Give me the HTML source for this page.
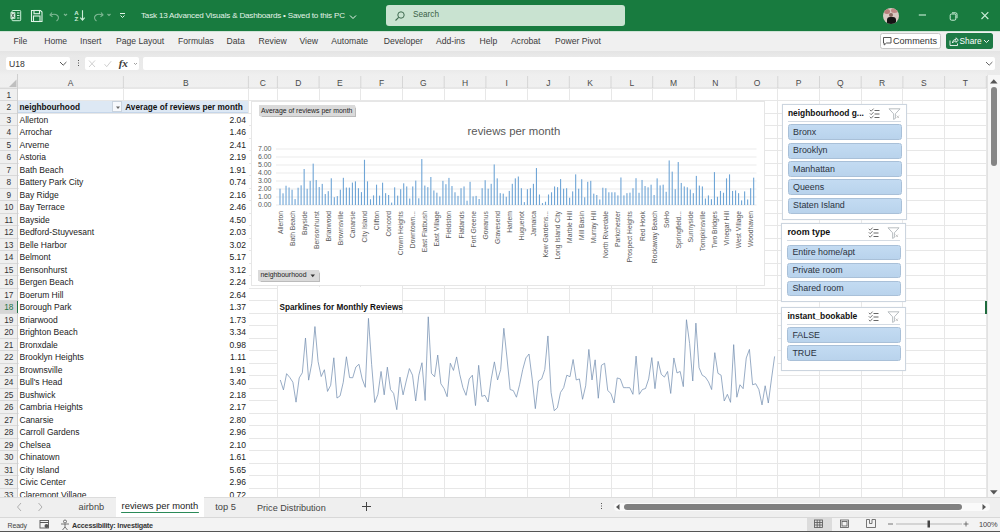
<!DOCTYPE html><html><head><meta charset="utf-8"><style>
*{margin:0;padding:0;box-sizing:border-box}
html,body{width:1000px;height:532px;overflow:hidden;background:#fff;font-family:"Liberation Sans", sans-serif}
.ab{position:absolute}
.t{position:absolute;white-space:nowrap;line-height:1}

</style></head><body>
<div class="ab" style="left:0;top:0;width:1000px;height:31px;background:#187b3f"></div>
<svg class="ab" style="left:0;top:0" width="380" height="31" viewBox="0 0 380 31">
<rect x="12" y="10.5" width="8.7" height="10.2" rx="0.8" fill="none" stroke="#cdf2da" stroke-width="1"/>
<path d="M17 13h2.5M17 15.5h2.5M17 18h2.5" stroke="#cdf2da" stroke-width="1"/>
<rect x="10.5" y="12.2" width="4.8" height="6.6" fill="#d9f5e3"/>
<path d="M11.6 13.6l2.6 3.8M14.2 13.6l-2.6 3.8" stroke="#3f5a48" stroke-width="0.9"/>
<g fill="none" stroke="#dff3e6" stroke-width="1.1">
<path d="M31.5 10.5h9l1.5 1.5v9.5h-10.5z"/>
<rect x="34" y="10.5" width="5.5" height="3.2"/>
<rect x="33.5" y="16" width="6.5" height="5.5"/>
</g>
<g fill="none" stroke="#7fb894" stroke-width="1.1">
<path d="M52 12.5l-2 2.5 2.5 1.8"/><path d="M50.5 15c2-.8 5-1.2 7 .5 1.6 1.5 1.2 4-1 5.5"/>
<path d="M64 14l1.5 1.5 1.5-1.5"/>
</g>
<g fill="#cdeed9"><text x="74.2" y="15.2" font-family="Liberation Sans" font-size="6.2" font-weight="700">A</text>
<text x="74.4" y="20.6" font-family="Liberation Sans" font-size="6.2" font-weight="700">Z</text></g>
<g fill="none" stroke="#cdeed9" stroke-width="1.1"><path d="M82.5 10.2v9.8M80.3 17.6l2.2 2.5 2.2-2.5"/></g>
<g fill="none" stroke="#7fb894" stroke-width="1.1">
<path d="M101 12.5l2 2.5-2.5 1.8"/><path d="M102.5 15c-2-.8-5-1.2-7 .5-1.6 1.5-1.2 4 1 5.5"/>
<path d="M107.5 14l1.5 1.5 1.5-1.5"/>
</g>
<g fill="none" stroke="#dff3e6" stroke-width="1"><path d="M120 13.5h5M120.5 15.5l2 2 2-2"/></g>
</svg>
<div class="t" style="left:141px;top:12.14px;font-size:8.1px;color:#e3f3e8;font-weight:400;letter-spacing:-0.2px">Task 13 Advanced Visuals &amp; Dashboards • Saved to this PC</div>
<svg class="ab" style="left:349px;top:13.5px" width="8" height="6"><path d="M1 1.5l3 3 3-3" fill="none" stroke="#eef7f1" stroke-width="1"/></svg>
<div class="ab" style="left:386px;top:5px;width:239px;height:20.5px;background:#c9e3d1;border-radius:3px"></div>
<svg class="ab" style="left:394px;top:10px" width="12" height="12"><circle cx="7" cy="5" r="3.2" fill="none" stroke="#3f6b50" stroke-width="1"/><path d="M4.7 7.3L1.5 10.5" stroke="#3f6b50" stroke-width="1.1"/></svg>
<div class="t" style="left:413px;top:11.26px;font-size:8.2px;color:#3a5f47;font-weight:400;">Search</div>
<div class="ab" style="left:883px;top:7.8px;width:16px;height:15.8px;border-radius:50%;overflow:hidden;background:#d9c9c2"><div class="ab" style="left:1px;top:1px;width:6px;height:5px;border-radius:50%;background:#b77f7a"></div><div class="ab" style="left:8px;top:0.5px;width:7px;height:5px;border-radius:50%;background:#c08a86"></div><div class="ab" style="left:6px;top:5px;width:4px;height:4px;border-radius:50%;background:#8a6a60"></div><div class="ab" style="left:4px;top:9px;width:9px;height:8px;border-radius:3px 3px 0 0;background:#151414"></div></div>
<svg class="ab" style="left:910px;top:3px" width="90" height="26">
<path d="M8.8 12h7.2" stroke="#cdeed9" stroke-width="1.1"/>
<rect x="40.2" y="11" width="5.6" height="6.2" rx="1.3" fill="none" stroke="#cdeed9" stroke-width="1"/>
<path d="M42 9.8h3.6c.9 0 1.4.5 1.4 1.4v4" fill="none" stroke="#cdeed9" stroke-width="1"/>
<path d="M71.5 9.2l6.8 6.8M78.3 9.2l-6.8 6.8" stroke="#cdeed9" stroke-width="1.1"/>
</svg>
<div class="ab" style="left:0;top:31px;width:1000px;height:20px;background:#f0f0f0;border-top:1px solid #cfe3d6"></div>
<div class="ab" style="left:0;top:50.5px;width:1000px;height:1px;background:#d2d2d2"></div>
<div class="t" style="left:13.4px;top:37.32px;font-size:8.6px;color:#3b3b3b;font-weight:400;">File</div>
<div class="t" style="left:44.2px;top:37.32px;font-size:8.6px;color:#3b3b3b;font-weight:400;">Home</div>
<div class="t" style="left:80px;top:37.32px;font-size:8.6px;color:#3b3b3b;font-weight:400;">Insert</div>
<div class="t" style="left:116px;top:37.32px;font-size:8.6px;color:#3b3b3b;font-weight:400;">Page Layout</div>
<div class="t" style="left:178px;top:37.32px;font-size:8.6px;color:#3b3b3b;font-weight:400;">Formulas</div>
<div class="t" style="left:226.6px;top:37.32px;font-size:8.6px;color:#3b3b3b;font-weight:400;">Data</div>
<div class="t" style="left:258.6px;top:37.32px;font-size:8.6px;color:#3b3b3b;font-weight:400;">Review</div>
<div class="t" style="left:299.5px;top:37.32px;font-size:8.6px;color:#3b3b3b;font-weight:400;">View</div>
<div class="t" style="left:331.3px;top:37.32px;font-size:8.6px;color:#3b3b3b;font-weight:400;">Automate</div>
<div class="t" style="left:383.7px;top:37.32px;font-size:8.6px;color:#3b3b3b;font-weight:400;">Developer</div>
<div class="t" style="left:436px;top:37.32px;font-size:8.6px;color:#3b3b3b;font-weight:400;">Add-ins</div>
<div class="t" style="left:479.6px;top:37.32px;font-size:8.6px;color:#3b3b3b;font-weight:400;">Help</div>
<div class="t" style="left:510.9px;top:37.32px;font-size:8.6px;color:#3b3b3b;font-weight:400;">Acrobat</div>
<div class="t" style="left:555px;top:37.32px;font-size:8.6px;color:#3b3b3b;font-weight:400;">Power Pivot</div>
<div class="ab" style="left:879.6px;top:33px;width:61.2px;height:15.5px;background:#fff;border:1px solid #c7c7c7;border-radius:2.5px"></div>
<svg class="ab" style="left:882px;top:36px" width="12" height="11"><path d="M1.5 1.5h7.5v5.5h-4.5l-2.3 2v-2h-0.7z" fill="none" stroke="#444" stroke-width="0.9"/></svg>
<div class="t" style="left:893px;top:36.70px;font-size:9.1px;color:#333;font-weight:400;">Comments</div>
<div class="ab" style="left:946px;top:33px;width:47px;height:15.5px;background:#1d7a45;border-radius:2.5px"></div>
<svg class="ab" style="left:948.5px;top:35.5px" width="10" height="11"><path d="M1 4.5v5h7.5v-2M3.5 7c0-2.3 1.3-3.6 3.6-3.6V1.8l2.2 2.3-2.2 2.3V4.9c-1.8 0-2.8.6-3.6 2.1z" fill="none" stroke="#fff" stroke-width="0.85"/></svg>
<div class="t" style="left:959.5px;top:37.37px;font-size:8.3px;color:#fff;font-weight:400;">Share</div>
<svg class="ab" style="left:983px;top:39px" width="7" height="5"><path d="M1 1l2.5 2.5 2.5-2.5" fill="none" stroke="#fff" stroke-width="0.9"/></svg>
<div class="ab" style="left:0;top:51px;width:1000px;height:23.5px;background:linear-gradient(#e4e4e4 0,#e9e9e9 5px,#ebebeb 100%)"></div>
<div class="ab" style="left:6.4px;top:56.8px;width:63.6px;height:13.6px;background:#fff;border-radius:2px"></div>
<div class="t" style="left:9px;top:59.62px;font-size:8.6px;color:#333;font-weight:400;">U18</div>
<svg class="ab" style="left:59px;top:61px" width="9" height="6"><path d="M1 1l3.2 3.2 3.2-3.2" fill="none" stroke="#444" stroke-width="0.9"/></svg>
<div class="ab" style="left:77.5px;top:60px;width:1.3px;height:1.3px;background:#555;box-shadow:0 2.5px #555,0 5px #555"></div>
<div class="ab" style="left:85px;top:56.8px;width:54px;height:13.6px;background:#fff;border-radius:2px"></div>
<svg class="ab" style="left:85px;top:57px" width="55" height="14"><path d="M4 3.5l6 6.5M10 3.5l-6 6.5" stroke="#c9c9c9" stroke-width="0.9"/><path d="M19.5 7.2l2.2 2.5 4.5-5.5" fill="none" stroke="#c9c9c9" stroke-width="0.9"/><path d="M49 6l1.5 1.5 1.5-1.5" fill="none" stroke="#888" stroke-width="0.8"/></svg>
<div class="t" style="left:118.8px;top:58.32px;font-size:11.2px;color:#3a3a3a;font-weight:700;font-family:'Liberation Serif';font-style:italic;letter-spacing:-0.2px">fx</div>
<div class="ab" style="left:143px;top:56.8px;width:852px;height:13.6px;background:#fff;border-radius:2px"></div>
<svg class="ab" style="left:985px;top:61px" width="9" height="6"><path d="M1 1l3.2 3.2 3.2-3.2" fill="none" stroke="#555" stroke-width="0.9"/></svg>
<div class="ab" style="left:0;top:71px;width:987px;height:17.5px;background:linear-gradient(#ebebeb 0,#efefef 4px,#f0f0f0 100%)"></div>
<svg class="ab" style="left:0;top:74.5px" width="18" height="14"><path d="M16.5 4.5v7.5h-7.5z" fill="#bfbfbf"/></svg>
<svg class="ab" style="left:0;top:0" width="1000" height="532"><line x1="123.4" y1="76" x2="123.4" y2="88" stroke="#d6d6d6" stroke-width="1"/><line x1="248.4" y1="76" x2="248.4" y2="88" stroke="#d6d6d6" stroke-width="1"/><line x1="277.4" y1="76" x2="277.4" y2="88" stroke="#d6d6d6" stroke-width="1"/><line x1="319.09999999999997" y1="76" x2="319.09999999999997" y2="88" stroke="#d6d6d6" stroke-width="1"/><line x1="360.79999999999995" y1="76" x2="360.79999999999995" y2="88" stroke="#d6d6d6" stroke-width="1"/><line x1="402.5" y1="76" x2="402.5" y2="88" stroke="#d6d6d6" stroke-width="1"/><line x1="444.2" y1="76" x2="444.2" y2="88" stroke="#d6d6d6" stroke-width="1"/><line x1="485.9" y1="76" x2="485.9" y2="88" stroke="#d6d6d6" stroke-width="1"/><line x1="527.6" y1="76" x2="527.6" y2="88" stroke="#d6d6d6" stroke-width="1"/><line x1="569.3" y1="76" x2="569.3" y2="88" stroke="#d6d6d6" stroke-width="1"/><line x1="611.0" y1="76" x2="611.0" y2="88" stroke="#d6d6d6" stroke-width="1"/><line x1="652.7" y1="76" x2="652.7" y2="88" stroke="#d6d6d6" stroke-width="1"/><line x1="694.4" y1="76" x2="694.4" y2="88" stroke="#d6d6d6" stroke-width="1"/><line x1="736.1" y1="76" x2="736.1" y2="88" stroke="#d6d6d6" stroke-width="1"/><line x1="777.8" y1="76" x2="777.8" y2="88" stroke="#d6d6d6" stroke-width="1"/><line x1="819.5" y1="76" x2="819.5" y2="88" stroke="#d6d6d6" stroke-width="1"/><line x1="861.2" y1="76" x2="861.2" y2="88" stroke="#d6d6d6" stroke-width="1"/><line x1="902.9" y1="76" x2="902.9" y2="88" stroke="#d6d6d6" stroke-width="1"/><line x1="944.6" y1="76" x2="944.6" y2="88" stroke="#d6d6d6" stroke-width="1"/><line x1="986.3000000000001" y1="76" x2="986.3000000000001" y2="88" stroke="#d6d6d6" stroke-width="1"/><line x1="0" y1="88.3" x2="986.8" y2="88.3" stroke="#c4c4c4" stroke-width="1"/></svg>
<div class="t" style="left:18.0px;top:78.60px;font-size:8.5px;color:#4a4a4a;font-weight:400;width:105.4px;text-align:center">A</div>
<div class="t" style="left:123.4px;top:78.60px;font-size:8.5px;color:#4a4a4a;font-weight:400;width:125.0px;text-align:center">B</div>
<div class="t" style="left:248.4px;top:78.60px;font-size:8.5px;color:#4a4a4a;font-weight:400;width:28.99999999999997px;text-align:center">C</div>
<div class="t" style="left:277.4px;top:78.60px;font-size:8.5px;color:#4a4a4a;font-weight:400;width:41.69999999999999px;text-align:center">D</div>
<div class="t" style="left:319.09999999999997px;top:78.60px;font-size:8.5px;color:#4a4a4a;font-weight:400;width:41.69999999999999px;text-align:center">E</div>
<div class="t" style="left:360.79999999999995px;top:78.60px;font-size:8.5px;color:#4a4a4a;font-weight:400;width:41.700000000000045px;text-align:center">F</div>
<div class="t" style="left:402.5px;top:78.60px;font-size:8.5px;color:#4a4a4a;font-weight:400;width:41.69999999999999px;text-align:center">G</div>
<div class="t" style="left:444.2px;top:78.60px;font-size:8.5px;color:#4a4a4a;font-weight:400;width:41.69999999999999px;text-align:center">H</div>
<div class="t" style="left:485.9px;top:78.60px;font-size:8.5px;color:#4a4a4a;font-weight:400;width:41.700000000000045px;text-align:center">I</div>
<div class="t" style="left:527.6px;top:78.60px;font-size:8.5px;color:#4a4a4a;font-weight:400;width:41.69999999999993px;text-align:center">J</div>
<div class="t" style="left:569.3px;top:78.60px;font-size:8.5px;color:#4a4a4a;font-weight:400;width:41.700000000000045px;text-align:center">K</div>
<div class="t" style="left:611.0px;top:78.60px;font-size:8.5px;color:#4a4a4a;font-weight:400;width:41.700000000000045px;text-align:center">L</div>
<div class="t" style="left:652.7px;top:78.60px;font-size:8.5px;color:#4a4a4a;font-weight:400;width:41.69999999999993px;text-align:center">M</div>
<div class="t" style="left:694.4px;top:78.60px;font-size:8.5px;color:#4a4a4a;font-weight:400;width:41.700000000000045px;text-align:center">N</div>
<div class="t" style="left:736.1px;top:78.60px;font-size:8.5px;color:#4a4a4a;font-weight:400;width:41.69999999999993px;text-align:center">O</div>
<div class="t" style="left:777.8px;top:78.60px;font-size:8.5px;color:#4a4a4a;font-weight:400;width:41.700000000000045px;text-align:center">P</div>
<div class="t" style="left:819.5px;top:78.60px;font-size:8.5px;color:#4a4a4a;font-weight:400;width:41.700000000000045px;text-align:center">Q</div>
<div class="t" style="left:861.2px;top:78.60px;font-size:8.5px;color:#4a4a4a;font-weight:400;width:41.69999999999993px;text-align:center">R</div>
<div class="t" style="left:902.9px;top:78.60px;font-size:8.5px;color:#4a4a4a;font-weight:400;width:41.700000000000045px;text-align:center">S</div>
<div class="t" style="left:944.6px;top:78.60px;font-size:8.5px;color:#4a4a4a;font-weight:400;width:41.700000000000045px;text-align:center">T</div>
<div class="ab" style="left:0;top:88px;width:18px;height:409px;background:#efefef"></div>
<div class="ab" style="left:0;top:300.5px;width:18px;height:12.5px;background:#d6d6d6"></div>
<svg class="ab" style="left:0;top:0" width="1000" height="532" shape-rendering="crispEdges"><line x1="0" y1="88.0" x2="18" y2="88.0" stroke="#d9d9d9"/><line x1="18" y1="88.0" x2="986.8" y2="88.0" stroke="#e7e7e7"/><line x1="0" y1="100.5" x2="18" y2="100.5" stroke="#d9d9d9"/><line x1="18" y1="100.5" x2="986.8" y2="100.5" stroke="#e7e7e7"/><line x1="0" y1="113.0" x2="18" y2="113.0" stroke="#d9d9d9"/><line x1="18" y1="113.0" x2="986.8" y2="113.0" stroke="#e7e7e7"/><line x1="0" y1="125.5" x2="18" y2="125.5" stroke="#d9d9d9"/><line x1="18" y1="125.5" x2="986.8" y2="125.5" stroke="#e7e7e7"/><line x1="0" y1="138.0" x2="18" y2="138.0" stroke="#d9d9d9"/><line x1="18" y1="138.0" x2="986.8" y2="138.0" stroke="#e7e7e7"/><line x1="0" y1="150.5" x2="18" y2="150.5" stroke="#d9d9d9"/><line x1="18" y1="150.5" x2="986.8" y2="150.5" stroke="#e7e7e7"/><line x1="0" y1="163.0" x2="18" y2="163.0" stroke="#d9d9d9"/><line x1="18" y1="163.0" x2="986.8" y2="163.0" stroke="#e7e7e7"/><line x1="0" y1="175.5" x2="18" y2="175.5" stroke="#d9d9d9"/><line x1="18" y1="175.5" x2="986.8" y2="175.5" stroke="#e7e7e7"/><line x1="0" y1="188.0" x2="18" y2="188.0" stroke="#d9d9d9"/><line x1="18" y1="188.0" x2="986.8" y2="188.0" stroke="#e7e7e7"/><line x1="0" y1="200.5" x2="18" y2="200.5" stroke="#d9d9d9"/><line x1="18" y1="200.5" x2="986.8" y2="200.5" stroke="#e7e7e7"/><line x1="0" y1="213.0" x2="18" y2="213.0" stroke="#d9d9d9"/><line x1="18" y1="213.0" x2="986.8" y2="213.0" stroke="#e7e7e7"/><line x1="0" y1="225.5" x2="18" y2="225.5" stroke="#d9d9d9"/><line x1="18" y1="225.5" x2="986.8" y2="225.5" stroke="#e7e7e7"/><line x1="0" y1="238.0" x2="18" y2="238.0" stroke="#d9d9d9"/><line x1="18" y1="238.0" x2="986.8" y2="238.0" stroke="#e7e7e7"/><line x1="0" y1="250.5" x2="18" y2="250.5" stroke="#d9d9d9"/><line x1="18" y1="250.5" x2="986.8" y2="250.5" stroke="#e7e7e7"/><line x1="0" y1="263.0" x2="18" y2="263.0" stroke="#d9d9d9"/><line x1="18" y1="263.0" x2="986.8" y2="263.0" stroke="#e7e7e7"/><line x1="0" y1="275.5" x2="18" y2="275.5" stroke="#d9d9d9"/><line x1="18" y1="275.5" x2="986.8" y2="275.5" stroke="#e7e7e7"/><line x1="0" y1="288.0" x2="18" y2="288.0" stroke="#d9d9d9"/><line x1="18" y1="288.0" x2="986.8" y2="288.0" stroke="#e7e7e7"/><line x1="0" y1="300.5" x2="18" y2="300.5" stroke="#d9d9d9"/><line x1="18" y1="300.5" x2="986.8" y2="300.5" stroke="#e7e7e7"/><line x1="0" y1="313.0" x2="18" y2="313.0" stroke="#d9d9d9"/><line x1="18" y1="313.0" x2="986.8" y2="313.0" stroke="#e7e7e7"/><line x1="0" y1="325.5" x2="18" y2="325.5" stroke="#d9d9d9"/><line x1="18" y1="325.5" x2="986.8" y2="325.5" stroke="#e7e7e7"/><line x1="0" y1="338.0" x2="18" y2="338.0" stroke="#d9d9d9"/><line x1="18" y1="338.0" x2="986.8" y2="338.0" stroke="#e7e7e7"/><line x1="0" y1="350.5" x2="18" y2="350.5" stroke="#d9d9d9"/><line x1="18" y1="350.5" x2="986.8" y2="350.5" stroke="#e7e7e7"/><line x1="0" y1="363.0" x2="18" y2="363.0" stroke="#d9d9d9"/><line x1="18" y1="363.0" x2="986.8" y2="363.0" stroke="#e7e7e7"/><line x1="0" y1="375.5" x2="18" y2="375.5" stroke="#d9d9d9"/><line x1="18" y1="375.5" x2="986.8" y2="375.5" stroke="#e7e7e7"/><line x1="0" y1="388.0" x2="18" y2="388.0" stroke="#d9d9d9"/><line x1="18" y1="388.0" x2="986.8" y2="388.0" stroke="#e7e7e7"/><line x1="0" y1="400.5" x2="18" y2="400.5" stroke="#d9d9d9"/><line x1="18" y1="400.5" x2="986.8" y2="400.5" stroke="#e7e7e7"/><line x1="0" y1="413.0" x2="18" y2="413.0" stroke="#d9d9d9"/><line x1="18" y1="413.0" x2="986.8" y2="413.0" stroke="#e7e7e7"/><line x1="0" y1="425.5" x2="18" y2="425.5" stroke="#d9d9d9"/><line x1="18" y1="425.5" x2="986.8" y2="425.5" stroke="#e7e7e7"/><line x1="0" y1="438.0" x2="18" y2="438.0" stroke="#d9d9d9"/><line x1="18" y1="438.0" x2="986.8" y2="438.0" stroke="#e7e7e7"/><line x1="0" y1="450.5" x2="18" y2="450.5" stroke="#d9d9d9"/><line x1="18" y1="450.5" x2="986.8" y2="450.5" stroke="#e7e7e7"/><line x1="0" y1="463.0" x2="18" y2="463.0" stroke="#d9d9d9"/><line x1="18" y1="463.0" x2="986.8" y2="463.0" stroke="#e7e7e7"/><line x1="0" y1="475.5" x2="18" y2="475.5" stroke="#d9d9d9"/><line x1="18" y1="475.5" x2="986.8" y2="475.5" stroke="#e7e7e7"/><line x1="0" y1="488.0" x2="18" y2="488.0" stroke="#d9d9d9"/><line x1="18" y1="488.0" x2="986.8" y2="488.0" stroke="#e7e7e7"/><line x1="0" y1="500.5" x2="18" y2="500.5" stroke="#d9d9d9"/><line x1="18" y1="500.5" x2="986.8" y2="500.5" stroke="#e7e7e7"/><line x1="123.4" y1="88" x2="123.4" y2="497" stroke="#e7e7e7"/><line x1="248.4" y1="88" x2="248.4" y2="497" stroke="#e7e7e7"/><line x1="277.4" y1="88" x2="277.4" y2="497" stroke="#e7e7e7"/><line x1="319.09999999999997" y1="88" x2="319.09999999999997" y2="497" stroke="#e7e7e7"/><line x1="360.79999999999995" y1="88" x2="360.79999999999995" y2="497" stroke="#e7e7e7"/><line x1="402.5" y1="88" x2="402.5" y2="497" stroke="#e7e7e7"/><line x1="444.2" y1="88" x2="444.2" y2="497" stroke="#e7e7e7"/><line x1="485.9" y1="88" x2="485.9" y2="497" stroke="#e7e7e7"/><line x1="527.6" y1="88" x2="527.6" y2="497" stroke="#e7e7e7"/><line x1="569.3" y1="88" x2="569.3" y2="497" stroke="#e7e7e7"/><line x1="611.0" y1="88" x2="611.0" y2="497" stroke="#e7e7e7"/><line x1="652.7" y1="88" x2="652.7" y2="497" stroke="#e7e7e7"/><line x1="694.4" y1="88" x2="694.4" y2="497" stroke="#e7e7e7"/><line x1="736.1" y1="88" x2="736.1" y2="497" stroke="#e7e7e7"/><line x1="777.8" y1="88" x2="777.8" y2="497" stroke="#e7e7e7"/><line x1="819.5" y1="88" x2="819.5" y2="497" stroke="#e7e7e7"/><line x1="861.2" y1="88" x2="861.2" y2="497" stroke="#e7e7e7"/><line x1="902.9" y1="88" x2="902.9" y2="497" stroke="#e7e7e7"/><line x1="944.6" y1="88" x2="944.6" y2="497" stroke="#e7e7e7"/><line x1="986.3000000000001" y1="88" x2="986.3000000000001" y2="497" stroke="#e7e7e7"/><line x1="17.5" y1="74" x2="17.5" y2="497" stroke="#cfcfcf"/><line x1="17.5" y1="300.5" x2="17.5" y2="313.0" stroke="#217346" stroke-width="1.5"/></svg>
<div class="t" style="left:0px;top:90.87px;font-size:8.3px;color:#333;font-weight:400;width:17.5px;text-align:center">1</div>
<div class="t" style="left:0px;top:103.37px;font-size:8.3px;color:#333;font-weight:400;width:17.5px;text-align:center">2</div>
<div class="t" style="left:0px;top:115.87px;font-size:8.3px;color:#333;font-weight:400;width:17.5px;text-align:center">3</div>
<div class="t" style="left:0px;top:128.37px;font-size:8.3px;color:#333;font-weight:400;width:17.5px;text-align:center">4</div>
<div class="t" style="left:0px;top:140.87px;font-size:8.3px;color:#333;font-weight:400;width:17.5px;text-align:center">5</div>
<div class="t" style="left:0px;top:153.37px;font-size:8.3px;color:#333;font-weight:400;width:17.5px;text-align:center">6</div>
<div class="t" style="left:0px;top:165.87px;font-size:8.3px;color:#333;font-weight:400;width:17.5px;text-align:center">7</div>
<div class="t" style="left:0px;top:178.37px;font-size:8.3px;color:#333;font-weight:400;width:17.5px;text-align:center">8</div>
<div class="t" style="left:0px;top:190.87px;font-size:8.3px;color:#333;font-weight:400;width:17.5px;text-align:center">9</div>
<div class="t" style="left:0px;top:203.37px;font-size:8.3px;color:#333;font-weight:400;width:17.5px;text-align:center">10</div>
<div class="t" style="left:0px;top:215.87px;font-size:8.3px;color:#333;font-weight:400;width:17.5px;text-align:center">11</div>
<div class="t" style="left:0px;top:228.37px;font-size:8.3px;color:#333;font-weight:400;width:17.5px;text-align:center">12</div>
<div class="t" style="left:0px;top:240.87px;font-size:8.3px;color:#333;font-weight:400;width:17.5px;text-align:center">13</div>
<div class="t" style="left:0px;top:253.37px;font-size:8.3px;color:#333;font-weight:400;width:17.5px;text-align:center">14</div>
<div class="t" style="left:0px;top:265.87px;font-size:8.3px;color:#333;font-weight:400;width:17.5px;text-align:center">15</div>
<div class="t" style="left:0px;top:278.37px;font-size:8.3px;color:#333;font-weight:400;width:17.5px;text-align:center">16</div>
<div class="t" style="left:0px;top:290.87px;font-size:8.3px;color:#333;font-weight:400;width:17.5px;text-align:center">17</div>
<div class="t" style="left:0px;top:303.37px;font-size:8.3px;color:#217346;font-weight:400;width:17.5px;text-align:center">18</div>
<div class="t" style="left:0px;top:315.87px;font-size:8.3px;color:#333;font-weight:400;width:17.5px;text-align:center">19</div>
<div class="t" style="left:0px;top:328.37px;font-size:8.3px;color:#333;font-weight:400;width:17.5px;text-align:center">20</div>
<div class="t" style="left:0px;top:340.87px;font-size:8.3px;color:#333;font-weight:400;width:17.5px;text-align:center">21</div>
<div class="t" style="left:0px;top:353.37px;font-size:8.3px;color:#333;font-weight:400;width:17.5px;text-align:center">22</div>
<div class="t" style="left:0px;top:365.87px;font-size:8.3px;color:#333;font-weight:400;width:17.5px;text-align:center">23</div>
<div class="t" style="left:0px;top:378.37px;font-size:8.3px;color:#333;font-weight:400;width:17.5px;text-align:center">24</div>
<div class="t" style="left:0px;top:390.87px;font-size:8.3px;color:#333;font-weight:400;width:17.5px;text-align:center">25</div>
<div class="t" style="left:0px;top:403.37px;font-size:8.3px;color:#333;font-weight:400;width:17.5px;text-align:center">26</div>
<div class="t" style="left:0px;top:415.87px;font-size:8.3px;color:#333;font-weight:400;width:17.5px;text-align:center">27</div>
<div class="t" style="left:0px;top:428.37px;font-size:8.3px;color:#333;font-weight:400;width:17.5px;text-align:center">28</div>
<div class="t" style="left:0px;top:440.87px;font-size:8.3px;color:#333;font-weight:400;width:17.5px;text-align:center">29</div>
<div class="t" style="left:0px;top:453.37px;font-size:8.3px;color:#333;font-weight:400;width:17.5px;text-align:center">30</div>
<div class="t" style="left:0px;top:465.87px;font-size:8.3px;color:#333;font-weight:400;width:17.5px;text-align:center">31</div>
<div class="t" style="left:0px;top:478.37px;font-size:8.3px;color:#333;font-weight:400;width:17.5px;text-align:center">32</div>
<div class="t" style="left:0px;top:490.87px;font-size:8.3px;color:#333;font-weight:400;width:17.5px;text-align:center">33</div>
<div class="ab" style="left:18.5px;top:113.5px;width:230.5px;height:383.5px;background:#fff"></div>
<div class="ab" style="left:18px;top:100.5px;width:230.4px;height:12.5px;background:#dde8f4;border-bottom:1px solid #c5d6ea"></div>
<div class="t" style="left:19.5px;top:103.62px;font-size:8.25px;color:#111;font-weight:700;">neighbourhood</div>
<div class="ab" style="left:112.4px;top:101.0px;width:10px;height:11px;background:#f7f9fc;border:1px solid #c9d3de"></div>
<svg class="ab" style="left:114.5px;top:105.5px" width="6" height="4"><path d="M1 0.5h4l-2 2.5z" fill="#666"/></svg>
<div class="t" style="left:125.2px;top:103.61px;font-size:8.26px;color:#111;font-weight:700;">Average of reviews per month</div>
<div class="t" style="left:19.5px;top:115.60px;font-size:8.5px;color:#222;font-weight:400;">Allerton</div>
<div class="t" style="left:150px;top:115.60px;font-size:8.5px;color:#222;font-weight:400;width:96px;text-align:right">2.04</div>
<div class="t" style="left:19.5px;top:128.10px;font-size:8.5px;color:#222;font-weight:400;">Arrochar</div>
<div class="t" style="left:150px;top:128.10px;font-size:8.5px;color:#222;font-weight:400;width:96px;text-align:right">1.46</div>
<div class="t" style="left:19.5px;top:140.60px;font-size:8.5px;color:#222;font-weight:400;">Arverne</div>
<div class="t" style="left:150px;top:140.60px;font-size:8.5px;color:#222;font-weight:400;width:96px;text-align:right">2.41</div>
<div class="t" style="left:19.5px;top:153.10px;font-size:8.5px;color:#222;font-weight:400;">Astoria</div>
<div class="t" style="left:150px;top:153.10px;font-size:8.5px;color:#222;font-weight:400;width:96px;text-align:right">2.19</div>
<div class="t" style="left:19.5px;top:165.60px;font-size:8.5px;color:#222;font-weight:400;">Bath Beach</div>
<div class="t" style="left:150px;top:165.60px;font-size:8.5px;color:#222;font-weight:400;width:96px;text-align:right">1.91</div>
<div class="t" style="left:19.5px;top:178.10px;font-size:8.5px;color:#222;font-weight:400;">Battery Park City</div>
<div class="t" style="left:150px;top:178.10px;font-size:8.5px;color:#222;font-weight:400;width:96px;text-align:right">0.74</div>
<div class="t" style="left:19.5px;top:190.60px;font-size:8.5px;color:#222;font-weight:400;">Bay Ridge</div>
<div class="t" style="left:150px;top:190.60px;font-size:8.5px;color:#222;font-weight:400;width:96px;text-align:right">2.16</div>
<div class="t" style="left:19.5px;top:203.10px;font-size:8.5px;color:#222;font-weight:400;">Bay Terrace</div>
<div class="t" style="left:150px;top:203.10px;font-size:8.5px;color:#222;font-weight:400;width:96px;text-align:right">2.46</div>
<div class="t" style="left:19.5px;top:215.60px;font-size:8.5px;color:#222;font-weight:400;">Bayside</div>
<div class="t" style="left:150px;top:215.60px;font-size:8.5px;color:#222;font-weight:400;width:96px;text-align:right">4.50</div>
<div class="t" style="left:19.5px;top:228.10px;font-size:8.5px;color:#222;font-weight:400;">Bedford-Stuyvesant</div>
<div class="t" style="left:150px;top:228.10px;font-size:8.5px;color:#222;font-weight:400;width:96px;text-align:right">2.03</div>
<div class="t" style="left:19.5px;top:240.60px;font-size:8.5px;color:#222;font-weight:400;">Belle Harbor</div>
<div class="t" style="left:150px;top:240.60px;font-size:8.5px;color:#222;font-weight:400;width:96px;text-align:right">3.02</div>
<div class="t" style="left:19.5px;top:253.10px;font-size:8.5px;color:#222;font-weight:400;">Belmont</div>
<div class="t" style="left:150px;top:253.10px;font-size:8.5px;color:#222;font-weight:400;width:96px;text-align:right">5.17</div>
<div class="t" style="left:19.5px;top:265.60px;font-size:8.5px;color:#222;font-weight:400;">Bensonhurst</div>
<div class="t" style="left:150px;top:265.60px;font-size:8.5px;color:#222;font-weight:400;width:96px;text-align:right">3.12</div>
<div class="t" style="left:19.5px;top:278.10px;font-size:8.5px;color:#222;font-weight:400;">Bergen Beach</div>
<div class="t" style="left:150px;top:278.10px;font-size:8.5px;color:#222;font-weight:400;width:96px;text-align:right">2.24</div>
<div class="t" style="left:19.5px;top:290.60px;font-size:8.5px;color:#222;font-weight:400;">Boerum Hill</div>
<div class="t" style="left:150px;top:290.60px;font-size:8.5px;color:#222;font-weight:400;width:96px;text-align:right">2.64</div>
<div class="t" style="left:19.5px;top:303.10px;font-size:8.5px;color:#222;font-weight:400;">Borough Park</div>
<div class="t" style="left:150px;top:303.10px;font-size:8.5px;color:#222;font-weight:400;width:96px;text-align:right">1.37</div>
<div class="t" style="left:19.5px;top:315.60px;font-size:8.5px;color:#222;font-weight:400;">Briarwood</div>
<div class="t" style="left:150px;top:315.60px;font-size:8.5px;color:#222;font-weight:400;width:96px;text-align:right">1.73</div>
<div class="t" style="left:19.5px;top:328.10px;font-size:8.5px;color:#222;font-weight:400;">Brighton Beach</div>
<div class="t" style="left:150px;top:328.10px;font-size:8.5px;color:#222;font-weight:400;width:96px;text-align:right">3.34</div>
<div class="t" style="left:19.5px;top:340.60px;font-size:8.5px;color:#222;font-weight:400;">Bronxdale</div>
<div class="t" style="left:150px;top:340.60px;font-size:8.5px;color:#222;font-weight:400;width:96px;text-align:right">0.98</div>
<div class="t" style="left:19.5px;top:353.10px;font-size:8.5px;color:#222;font-weight:400;">Brooklyn Heights</div>
<div class="t" style="left:150px;top:353.10px;font-size:8.5px;color:#222;font-weight:400;width:96px;text-align:right">1.11</div>
<div class="t" style="left:19.5px;top:365.60px;font-size:8.5px;color:#222;font-weight:400;">Brownsville</div>
<div class="t" style="left:150px;top:365.60px;font-size:8.5px;color:#222;font-weight:400;width:96px;text-align:right">1.91</div>
<div class="t" style="left:19.5px;top:378.10px;font-size:8.5px;color:#222;font-weight:400;">Bull&#x27;s Head</div>
<div class="t" style="left:150px;top:378.10px;font-size:8.5px;color:#222;font-weight:400;width:96px;text-align:right">3.40</div>
<div class="t" style="left:19.5px;top:390.60px;font-size:8.5px;color:#222;font-weight:400;">Bushwick</div>
<div class="t" style="left:150px;top:390.60px;font-size:8.5px;color:#222;font-weight:400;width:96px;text-align:right">2.18</div>
<div class="t" style="left:19.5px;top:403.10px;font-size:8.5px;color:#222;font-weight:400;">Cambria Heights</div>
<div class="t" style="left:150px;top:403.10px;font-size:8.5px;color:#222;font-weight:400;width:96px;text-align:right">2.17</div>
<div class="t" style="left:19.5px;top:415.60px;font-size:8.5px;color:#222;font-weight:400;">Canarsie</div>
<div class="t" style="left:150px;top:415.60px;font-size:8.5px;color:#222;font-weight:400;width:96px;text-align:right">2.80</div>
<div class="t" style="left:19.5px;top:428.10px;font-size:8.5px;color:#222;font-weight:400;">Carroll Gardens</div>
<div class="t" style="left:150px;top:428.10px;font-size:8.5px;color:#222;font-weight:400;width:96px;text-align:right">2.96</div>
<div class="t" style="left:19.5px;top:440.60px;font-size:8.5px;color:#222;font-weight:400;">Chelsea</div>
<div class="t" style="left:150px;top:440.60px;font-size:8.5px;color:#222;font-weight:400;width:96px;text-align:right">2.10</div>
<div class="t" style="left:19.5px;top:453.10px;font-size:8.5px;color:#222;font-weight:400;">Chinatown</div>
<div class="t" style="left:150px;top:453.10px;font-size:8.5px;color:#222;font-weight:400;width:96px;text-align:right">1.61</div>
<div class="t" style="left:19.5px;top:465.60px;font-size:8.5px;color:#222;font-weight:400;">City Island</div>
<div class="t" style="left:150px;top:465.60px;font-size:8.5px;color:#222;font-weight:400;width:96px;text-align:right">5.65</div>
<div class="t" style="left:19.5px;top:478.10px;font-size:8.5px;color:#222;font-weight:400;">Civic Center</div>
<div class="t" style="left:150px;top:478.10px;font-size:8.5px;color:#222;font-weight:400;width:96px;text-align:right">2.96</div>
<div class="t" style="left:19.5px;top:490.60px;font-size:8.5px;color:#222;font-weight:400;">Claremont Village</div>
<div class="t" style="left:150px;top:490.60px;font-size:8.5px;color:#222;font-weight:400;width:96px;text-align:right">0.72</div>
<div class="ab" style="left:251.2px;top:100.5px;width:514.0px;height:185.8px;background:#fff;border:1px solid #e6e6e6"></div>
<div class="ab" style="left:258.9px;top:105.2px;width:96.6px;height:11.2px;background:#dadada;box-shadow:0.5px 0.5px 1px #bbb"></div>
<div class="t" style="left:261px;top:108.16px;font-size:6.9px;color:#222;font-weight:400;">Average of reviews per month</div>
<div class="t" style="left:467.6px;top:125.59px;font-size:11.35px;color:#595959;font-weight:400;">reviews per month</div>
<svg class="ab" style="left:0;top:0" width="1000" height="532"><line x1="276" y1="205" x2="756.5" y2="205" stroke="#e6e6e6" stroke-width="0.8"/><line x1="276" y1="197" x2="756.5" y2="197" stroke="#e6e6e6" stroke-width="0.8"/><line x1="276" y1="189" x2="756.5" y2="189" stroke="#e6e6e6" stroke-width="0.8"/><line x1="276" y1="181" x2="756.5" y2="181" stroke="#e6e6e6" stroke-width="0.8"/><line x1="276" y1="173" x2="756.5" y2="173" stroke="#e6e6e6" stroke-width="0.8"/><line x1="276" y1="165" x2="756.5" y2="165" stroke="#e6e6e6" stroke-width="0.8"/><line x1="276" y1="157" x2="756.5" y2="157" stroke="#e6e6e6" stroke-width="0.8"/><line x1="276" y1="149" x2="756.5" y2="149" stroke="#e6e6e6" stroke-width="0.8"/><rect x="279.45" y="188.68" width="1.1" height="16.32" fill="#6fa5d6"/><rect x="282.47" y="193.32" width="1.1" height="11.68" fill="#6fa5d6"/><rect x="285.48" y="185.72" width="1.1" height="19.28" fill="#6fa5d6"/><rect x="288.50" y="187.48" width="1.1" height="17.52" fill="#6fa5d6"/><rect x="291.52" y="189.72" width="1.1" height="15.28" fill="#6fa5d6"/><rect x="294.53" y="199.08" width="1.1" height="5.92" fill="#6fa5d6"/><rect x="297.55" y="187.72" width="1.1" height="17.28" fill="#6fa5d6"/><rect x="300.57" y="185.32" width="1.1" height="19.68" fill="#6fa5d6"/><rect x="303.59" y="169.00" width="1.1" height="36.00" fill="#6fa5d6"/><rect x="306.60" y="188.76" width="1.1" height="16.24" fill="#6fa5d6"/><rect x="309.62" y="180.84" width="1.1" height="24.16" fill="#6fa5d6"/><rect x="312.64" y="163.64" width="1.1" height="41.36" fill="#6fa5d6"/><rect x="315.65" y="180.04" width="1.1" height="24.96" fill="#6fa5d6"/><rect x="318.67" y="187.08" width="1.1" height="17.92" fill="#6fa5d6"/><rect x="321.69" y="183.88" width="1.1" height="21.12" fill="#6fa5d6"/><rect x="324.70" y="194.04" width="1.1" height="10.96" fill="#6fa5d6"/><rect x="327.72" y="191.16" width="1.1" height="13.84" fill="#6fa5d6"/><rect x="330.74" y="178.28" width="1.1" height="26.72" fill="#6fa5d6"/><rect x="333.76" y="197.16" width="1.1" height="7.84" fill="#6fa5d6"/><rect x="336.77" y="196.12" width="1.1" height="8.88" fill="#6fa5d6"/><rect x="339.79" y="189.72" width="1.1" height="15.28" fill="#6fa5d6"/><rect x="342.81" y="177.80" width="1.1" height="27.20" fill="#6fa5d6"/><rect x="345.82" y="187.56" width="1.1" height="17.44" fill="#6fa5d6"/><rect x="348.84" y="187.64" width="1.1" height="17.36" fill="#6fa5d6"/><rect x="351.86" y="182.60" width="1.1" height="22.40" fill="#6fa5d6"/><rect x="354.88" y="181.32" width="1.1" height="23.68" fill="#6fa5d6"/><rect x="357.89" y="188.20" width="1.1" height="16.80" fill="#6fa5d6"/><rect x="360.91" y="192.12" width="1.1" height="12.88" fill="#6fa5d6"/><rect x="363.93" y="159.80" width="1.1" height="45.20" fill="#6fa5d6"/><rect x="366.94" y="181.32" width="1.1" height="23.68" fill="#6fa5d6"/><rect x="369.96" y="199.24" width="1.1" height="5.76" fill="#6fa5d6"/><rect x="372.98" y="195.40" width="1.1" height="9.60" fill="#6fa5d6"/><rect x="375.99" y="184.68" width="1.1" height="20.32" fill="#6fa5d6"/><rect x="379.01" y="195.64" width="1.1" height="9.36" fill="#6fa5d6"/><rect x="382.03" y="182.68" width="1.1" height="22.32" fill="#6fa5d6"/><rect x="385.05" y="193.16" width="1.1" height="11.84" fill="#6fa5d6"/><rect x="388.06" y="195.00" width="1.1" height="10.00" fill="#6fa5d6"/><rect x="391.08" y="202.60" width="1.1" height="2.40" fill="#6fa5d6"/><rect x="394.10" y="187.32" width="1.1" height="17.68" fill="#6fa5d6"/><rect x="397.11" y="195.64" width="1.1" height="9.36" fill="#6fa5d6"/><rect x="400.13" y="189.16" width="1.1" height="15.84" fill="#6fa5d6"/><rect x="403.15" y="183.32" width="1.1" height="21.68" fill="#6fa5d6"/><rect x="406.16" y="186.44" width="1.1" height="18.56" fill="#6fa5d6"/><rect x="409.18" y="198.52" width="1.1" height="6.48" fill="#6fa5d6"/><rect x="412.20" y="186.44" width="1.1" height="18.56" fill="#6fa5d6"/><rect x="415.21" y="180.60" width="1.1" height="24.40" fill="#6fa5d6"/><rect x="418.23" y="198.28" width="1.1" height="6.72" fill="#6fa5d6"/><rect x="421.25" y="159.08" width="1.1" height="45.92" fill="#6fa5d6"/><rect x="424.27" y="185.56" width="1.1" height="19.44" fill="#6fa5d6"/><rect x="427.28" y="187.16" width="1.1" height="17.84" fill="#6fa5d6"/><rect x="430.30" y="177.00" width="1.1" height="28.00" fill="#6fa5d6"/><rect x="433.32" y="190.44" width="1.1" height="14.56" fill="#6fa5d6"/><rect x="436.33" y="192.68" width="1.1" height="12.32" fill="#6fa5d6"/><rect x="439.35" y="196.52" width="1.1" height="8.48" fill="#6fa5d6"/><rect x="442.37" y="180.84" width="1.1" height="24.16" fill="#6fa5d6"/><rect x="445.38" y="184.20" width="1.1" height="20.80" fill="#6fa5d6"/><rect x="448.40" y="177.88" width="1.1" height="27.12" fill="#6fa5d6"/><rect x="451.42" y="186.04" width="1.1" height="18.96" fill="#6fa5d6"/><rect x="454.44" y="192.28" width="1.1" height="12.72" fill="#6fa5d6"/><rect x="457.45" y="195.88" width="1.1" height="9.12" fill="#6fa5d6"/><rect x="460.47" y="188.20" width="1.1" height="16.80" fill="#6fa5d6"/><rect x="463.49" y="186.44" width="1.1" height="18.56" fill="#6fa5d6"/><rect x="466.50" y="200.68" width="1.1" height="4.32" fill="#6fa5d6"/><rect x="469.52" y="181.80" width="1.1" height="23.20" fill="#6fa5d6"/><rect x="472.54" y="196.36" width="1.1" height="8.64" fill="#6fa5d6"/><rect x="475.56" y="195.88" width="1.1" height="9.12" fill="#6fa5d6"/><rect x="478.57" y="199.00" width="1.1" height="6.00" fill="#6fa5d6"/><rect x="481.59" y="188.20" width="1.1" height="16.80" fill="#6fa5d6"/><rect x="484.61" y="180.20" width="1.1" height="24.80" fill="#6fa5d6"/><rect x="487.62" y="188.68" width="1.1" height="16.32" fill="#6fa5d6"/><rect x="490.64" y="183.80" width="1.1" height="21.20" fill="#6fa5d6"/><rect x="493.66" y="164.44" width="1.1" height="40.56" fill="#6fa5d6"/><rect x="496.67" y="178.36" width="1.1" height="26.64" fill="#6fa5d6"/><rect x="499.69" y="193.16" width="1.1" height="11.84" fill="#6fa5d6"/><rect x="502.71" y="193.64" width="1.1" height="11.36" fill="#6fa5d6"/><rect x="505.72" y="196.76" width="1.1" height="8.24" fill="#6fa5d6"/><rect x="508.74" y="190.92" width="1.1" height="14.08" fill="#6fa5d6"/><rect x="511.76" y="183.80" width="1.1" height="21.20" fill="#6fa5d6"/><rect x="514.78" y="178.36" width="1.1" height="26.64" fill="#6fa5d6"/><rect x="517.79" y="176.52" width="1.1" height="28.48" fill="#6fa5d6"/><rect x="520.81" y="188.20" width="1.1" height="16.80" fill="#6fa5d6"/><rect x="523.83" y="202.12" width="1.1" height="2.88" fill="#6fa5d6"/><rect x="526.84" y="189.16" width="1.1" height="15.84" fill="#6fa5d6"/><rect x="529.86" y="188.20" width="1.1" height="16.80" fill="#6fa5d6"/><rect x="532.88" y="183.80" width="1.1" height="21.20" fill="#6fa5d6"/><rect x="535.89" y="168.04" width="1.1" height="36.96" fill="#6fa5d6"/><rect x="538.91" y="194.52" width="1.1" height="10.48" fill="#6fa5d6"/><rect x="541.93" y="203.08" width="1.1" height="1.92" fill="#6fa5d6"/><rect x="544.95" y="201.72" width="1.1" height="3.28" fill="#6fa5d6"/><rect x="547.96" y="194.52" width="1.1" height="10.48" fill="#6fa5d6"/><rect x="550.98" y="192.28" width="1.1" height="12.72" fill="#6fa5d6"/><rect x="554.00" y="186.44" width="1.1" height="18.56" fill="#6fa5d6"/><rect x="557.01" y="187.16" width="1.1" height="17.84" fill="#6fa5d6"/><rect x="560.03" y="179.08" width="1.1" height="25.92" fill="#6fa5d6"/><rect x="563.05" y="188.68" width="1.1" height="16.32" fill="#6fa5d6"/><rect x="566.07" y="188.20" width="1.1" height="16.80" fill="#6fa5d6"/><rect x="569.08" y="197.72" width="1.1" height="7.28" fill="#6fa5d6"/><rect x="572.10" y="191.40" width="1.1" height="13.60" fill="#6fa5d6"/><rect x="575.12" y="174.36" width="1.1" height="30.64" fill="#6fa5d6"/><rect x="578.13" y="188.68" width="1.1" height="16.32" fill="#6fa5d6"/><rect x="581.15" y="179.24" width="1.1" height="25.76" fill="#6fa5d6"/><rect x="584.17" y="197.24" width="1.1" height="7.76" fill="#6fa5d6"/><rect x="587.18" y="181.80" width="1.1" height="23.20" fill="#6fa5d6"/><rect x="590.20" y="180.84" width="1.1" height="24.16" fill="#6fa5d6"/><rect x="593.22" y="193.64" width="1.1" height="11.36" fill="#6fa5d6"/><rect x="596.24" y="195.00" width="1.1" height="10.00" fill="#6fa5d6"/><rect x="599.25" y="199.48" width="1.1" height="5.52" fill="#6fa5d6"/><rect x="602.27" y="187.72" width="1.1" height="17.28" fill="#6fa5d6"/><rect x="605.29" y="188.20" width="1.1" height="16.80" fill="#6fa5d6"/><rect x="608.30" y="192.28" width="1.1" height="12.72" fill="#6fa5d6"/><rect x="611.32" y="192.28" width="1.1" height="12.72" fill="#6fa5d6"/><rect x="614.34" y="192.28" width="1.1" height="12.72" fill="#6fa5d6"/><rect x="617.35" y="195.40" width="1.1" height="9.60" fill="#6fa5d6"/><rect x="620.37" y="177.48" width="1.1" height="27.52" fill="#6fa5d6"/><rect x="623.39" y="195.40" width="1.1" height="9.60" fill="#6fa5d6"/><rect x="626.40" y="193.16" width="1.1" height="11.84" fill="#6fa5d6"/><rect x="629.42" y="192.68" width="1.1" height="12.32" fill="#6fa5d6"/><rect x="632.44" y="188.20" width="1.1" height="16.80" fill="#6fa5d6"/><rect x="635.46" y="178.20" width="1.1" height="26.80" fill="#6fa5d6"/><rect x="638.47" y="192.76" width="1.1" height="12.24" fill="#6fa5d6"/><rect x="641.49" y="179.96" width="1.1" height="25.04" fill="#6fa5d6"/><rect x="644.51" y="186.04" width="1.1" height="18.96" fill="#6fa5d6"/><rect x="647.52" y="187.32" width="1.1" height="17.68" fill="#6fa5d6"/><rect x="650.54" y="184.68" width="1.1" height="20.32" fill="#6fa5d6"/><rect x="653.56" y="195.00" width="1.1" height="10.00" fill="#6fa5d6"/><rect x="656.58" y="178.36" width="1.1" height="26.64" fill="#6fa5d6"/><rect x="659.59" y="185.40" width="1.1" height="19.60" fill="#6fa5d6"/><rect x="662.61" y="184.68" width="1.1" height="20.32" fill="#6fa5d6"/><rect x="665.63" y="191.80" width="1.1" height="13.20" fill="#6fa5d6"/><rect x="668.64" y="160.44" width="1.1" height="44.56" fill="#6fa5d6"/><rect x="671.66" y="171.64" width="1.1" height="33.36" fill="#6fa5d6"/><rect x="674.68" y="189.16" width="1.1" height="15.84" fill="#6fa5d6"/><rect x="677.69" y="162.04" width="1.1" height="42.96" fill="#6fa5d6"/><rect x="680.71" y="182.92" width="1.1" height="22.08" fill="#6fa5d6"/><rect x="683.73" y="186.44" width="1.1" height="18.56" fill="#6fa5d6"/><rect x="686.75" y="187.32" width="1.1" height="17.68" fill="#6fa5d6"/><rect x="689.76" y="189.56" width="1.1" height="15.44" fill="#6fa5d6"/><rect x="692.78" y="193.16" width="1.1" height="11.84" fill="#6fa5d6"/><rect x="695.80" y="175.88" width="1.1" height="29.12" fill="#6fa5d6"/><rect x="698.81" y="185.56" width="1.1" height="19.44" fill="#6fa5d6"/><rect x="701.83" y="186.44" width="1.1" height="18.56" fill="#6fa5d6"/><rect x="704.85" y="198.52" width="1.1" height="6.48" fill="#6fa5d6"/><rect x="707.86" y="195.40" width="1.1" height="9.60" fill="#6fa5d6"/><rect x="710.88" y="199.16" width="1.1" height="5.84" fill="#6fa5d6"/><rect x="713.90" y="172.12" width="1.1" height="32.88" fill="#6fa5d6"/><rect x="716.91" y="196.76" width="1.1" height="8.24" fill="#6fa5d6"/><rect x="719.93" y="190.92" width="1.1" height="14.08" fill="#6fa5d6"/><rect x="722.95" y="192.76" width="1.1" height="12.24" fill="#6fa5d6"/><rect x="725.97" y="178.36" width="1.1" height="26.64" fill="#6fa5d6"/><rect x="728.98" y="174.36" width="1.1" height="30.64" fill="#6fa5d6"/><rect x="732.00" y="190.92" width="1.1" height="14.08" fill="#6fa5d6"/><rect x="735.02" y="190.44" width="1.1" height="14.56" fill="#6fa5d6"/><rect x="738.03" y="193.16" width="1.1" height="11.84" fill="#6fa5d6"/><rect x="741.05" y="200.36" width="1.1" height="4.64" fill="#6fa5d6"/><rect x="744.07" y="191.40" width="1.1" height="13.60" fill="#6fa5d6"/><rect x="747.09" y="199.48" width="1.1" height="5.52" fill="#6fa5d6"/><rect x="750.10" y="188.20" width="1.1" height="16.80" fill="#6fa5d6"/><rect x="753.12" y="177.64" width="1.1" height="27.36" fill="#6fa5d6"/></svg>
<div class="t" style="left:250px;top:201.27px;font-size:7.0px;color:#595959;font-weight:400;width:21.5px;text-align:right">0.00</div>
<div class="t" style="left:250px;top:193.27px;font-size:7.0px;color:#595959;font-weight:400;width:21.5px;text-align:right">1.00</div>
<div class="t" style="left:250px;top:185.27px;font-size:7.0px;color:#595959;font-weight:400;width:21.5px;text-align:right">2.00</div>
<div class="t" style="left:250px;top:177.27px;font-size:7.0px;color:#595959;font-weight:400;width:21.5px;text-align:right">3.00</div>
<div class="t" style="left:250px;top:169.27px;font-size:7.0px;color:#595959;font-weight:400;width:21.5px;text-align:right">4.00</div>
<div class="t" style="left:250px;top:161.27px;font-size:7.0px;color:#595959;font-weight:400;width:21.5px;text-align:right">5.00</div>
<div class="t" style="left:250px;top:153.27px;font-size:7.0px;color:#595959;font-weight:400;width:21.5px;text-align:right">6.00</div>
<div class="t" style="left:250px;top:145.27px;font-size:7.0px;color:#595959;font-weight:400;width:21.5px;text-align:right">7.00</div>
<div class="t" style="left:277.5px;top:210.5px;font-size:6.75px;color:#595959;transform-origin:0 0;transform:translate(0px,0px) rotate(-90deg) translate(-100%,0);width:auto">Allerton</div>
<div class="t" style="left:289.568px;top:210.5px;font-size:6.75px;color:#595959;transform-origin:0 0;transform:translate(0px,0px) rotate(-90deg) translate(-100%,0);width:auto">Bath Beach</div>
<div class="t" style="left:301.636px;top:210.5px;font-size:6.75px;color:#595959;transform-origin:0 0;transform:translate(0px,0px) rotate(-90deg) translate(-100%,0);width:auto">Bayside</div>
<div class="t" style="left:313.704px;top:210.5px;font-size:6.75px;color:#595959;transform-origin:0 0;transform:translate(0px,0px) rotate(-90deg) translate(-100%,0);width:auto">Bensonhurst</div>
<div class="t" style="left:325.772px;top:210.5px;font-size:6.75px;color:#595959;transform-origin:0 0;transform:translate(0px,0px) rotate(-90deg) translate(-100%,0);width:auto">Briarwood</div>
<div class="t" style="left:337.84px;top:210.5px;font-size:6.75px;color:#595959;transform-origin:0 0;transform:translate(0px,0px) rotate(-90deg) translate(-100%,0);width:auto">Brownsville</div>
<div class="t" style="left:349.908px;top:210.5px;font-size:6.75px;color:#595959;transform-origin:0 0;transform:translate(0px,0px) rotate(-90deg) translate(-100%,0);width:auto">Canarsie</div>
<div class="t" style="left:361.976px;top:210.5px;font-size:6.75px;color:#595959;transform-origin:0 0;transform:translate(0px,0px) rotate(-90deg) translate(-100%,0);width:auto">City Island</div>
<div class="t" style="left:374.044px;top:210.5px;font-size:6.75px;color:#595959;transform-origin:0 0;transform:translate(0px,0px) rotate(-90deg) translate(-100%,0);width:auto">Clifton</div>
<div class="t" style="left:386.11199999999997px;top:210.5px;font-size:6.75px;color:#595959;transform-origin:0 0;transform:translate(0px,0px) rotate(-90deg) translate(-100%,0);width:auto">Concord</div>
<div class="t" style="left:398.18px;top:210.5px;font-size:6.75px;color:#595959;transform-origin:0 0;transform:translate(0px,0px) rotate(-90deg) translate(-100%,0);width:auto">Crown Heights</div>
<div class="t" style="left:410.248px;top:210.5px;font-size:6.75px;color:#595959;transform-origin:0 0;transform:translate(0px,0px) rotate(-90deg) translate(-100%,0);width:auto">Downtown...</div>
<div class="t" style="left:422.31600000000003px;top:210.5px;font-size:6.75px;color:#595959;transform-origin:0 0;transform:translate(0px,0px) rotate(-90deg) translate(-100%,0);width:auto">East Flatbush</div>
<div class="t" style="left:434.384px;top:210.5px;font-size:6.75px;color:#595959;transform-origin:0 0;transform:translate(0px,0px) rotate(-90deg) translate(-100%,0);width:auto">East Village</div>
<div class="t" style="left:446.452px;top:210.5px;font-size:6.75px;color:#595959;transform-origin:0 0;transform:translate(0px,0px) rotate(-90deg) translate(-100%,0);width:auto">Fieldston</div>
<div class="t" style="left:458.52px;top:210.5px;font-size:6.75px;color:#595959;transform-origin:0 0;transform:translate(0px,0px) rotate(-90deg) translate(-100%,0);width:auto">Flatlands</div>
<div class="t" style="left:470.58799999999997px;top:210.5px;font-size:6.75px;color:#595959;transform-origin:0 0;transform:translate(0px,0px) rotate(-90deg) translate(-100%,0);width:auto">Fort Greene</div>
<div class="t" style="left:482.656px;top:210.5px;font-size:6.75px;color:#595959;transform-origin:0 0;transform:translate(0px,0px) rotate(-90deg) translate(-100%,0);width:auto">Gowanus</div>
<div class="t" style="left:494.724px;top:210.5px;font-size:6.75px;color:#595959;transform-origin:0 0;transform:translate(0px,0px) rotate(-90deg) translate(-100%,0);width:auto">Gravesend</div>
<div class="t" style="left:506.79200000000003px;top:210.5px;font-size:6.75px;color:#595959;transform-origin:0 0;transform:translate(0px,0px) rotate(-90deg) translate(-100%,0);width:auto">Harlem</div>
<div class="t" style="left:518.86px;top:210.5px;font-size:6.75px;color:#595959;transform-origin:0 0;transform:translate(0px,0px) rotate(-90deg) translate(-100%,0);width:auto">Huguenot</div>
<div class="t" style="left:530.928px;top:210.5px;font-size:6.75px;color:#595959;transform-origin:0 0;transform:translate(0px,0px) rotate(-90deg) translate(-100%,0);width:auto">Jamaica</div>
<div class="t" style="left:542.996px;top:210.5px;font-size:6.75px;color:#595959;transform-origin:0 0;transform:translate(0px,0px) rotate(-90deg) translate(-100%,0);width:auto">Kew Gardens...</div>
<div class="t" style="left:555.064px;top:210.5px;font-size:6.75px;color:#595959;transform-origin:0 0;transform:translate(0px,0px) rotate(-90deg) translate(-100%,0);width:auto">Long Island City</div>
<div class="t" style="left:567.1320000000001px;top:210.5px;font-size:6.75px;color:#595959;transform-origin:0 0;transform:translate(0px,0px) rotate(-90deg) translate(-100%,0);width:auto">Marble Hill</div>
<div class="t" style="left:579.2px;top:210.5px;font-size:6.75px;color:#595959;transform-origin:0 0;transform:translate(0px,0px) rotate(-90deg) translate(-100%,0);width:auto">Mill Basin</div>
<div class="t" style="left:591.268px;top:210.5px;font-size:6.75px;color:#595959;transform-origin:0 0;transform:translate(0px,0px) rotate(-90deg) translate(-100%,0);width:auto">Murray Hill</div>
<div class="t" style="left:603.336px;top:210.5px;font-size:6.75px;color:#595959;transform-origin:0 0;transform:translate(0px,0px) rotate(-90deg) translate(-100%,0);width:auto">North Riverdale</div>
<div class="t" style="left:615.404px;top:210.5px;font-size:6.75px;color:#595959;transform-origin:0 0;transform:translate(0px,0px) rotate(-90deg) translate(-100%,0);width:auto">Parkchester</div>
<div class="t" style="left:627.472px;top:210.5px;font-size:6.75px;color:#595959;transform-origin:0 0;transform:translate(0px,0px) rotate(-90deg) translate(-100%,0);width:auto">Prospect Heights</div>
<div class="t" style="left:639.54px;top:210.5px;font-size:6.75px;color:#595959;transform-origin:0 0;transform:translate(0px,0px) rotate(-90deg) translate(-100%,0);width:auto">Red Hook</div>
<div class="t" style="left:651.608px;top:210.5px;font-size:6.75px;color:#595959;transform-origin:0 0;transform:translate(0px,0px) rotate(-90deg) translate(-100%,0);width:auto">Rockaway Beach</div>
<div class="t" style="left:663.6759999999999px;top:210.5px;font-size:6.75px;color:#595959;transform-origin:0 0;transform:translate(0px,0px) rotate(-90deg) translate(-100%,0);width:auto">SoHo</div>
<div class="t" style="left:675.7439999999999px;top:210.5px;font-size:6.75px;color:#595959;transform-origin:0 0;transform:translate(0px,0px) rotate(-90deg) translate(-100%,0);width:auto">Springfield...</div>
<div class="t" style="left:687.812px;top:210.5px;font-size:6.75px;color:#595959;transform-origin:0 0;transform:translate(0px,0px) rotate(-90deg) translate(-100%,0);width:auto">Sunnyside</div>
<div class="t" style="left:699.88px;top:210.5px;font-size:6.75px;color:#595959;transform-origin:0 0;transform:translate(0px,0px) rotate(-90deg) translate(-100%,0);width:auto">Tompkinsville</div>
<div class="t" style="left:711.948px;top:210.5px;font-size:6.75px;color:#595959;transform-origin:0 0;transform:translate(0px,0px) rotate(-90deg) translate(-100%,0);width:auto">Two Bridges</div>
<div class="t" style="left:724.016px;top:210.5px;font-size:6.75px;color:#595959;transform-origin:0 0;transform:translate(0px,0px) rotate(-90deg) translate(-100%,0);width:auto">Vinegar Hill</div>
<div class="t" style="left:736.0840000000001px;top:210.5px;font-size:6.75px;color:#595959;transform-origin:0 0;transform:translate(0px,0px) rotate(-90deg) translate(-100%,0);width:auto">West Village</div>
<div class="t" style="left:748.152px;top:210.5px;font-size:6.75px;color:#595959;transform-origin:0 0;transform:translate(0px,0px) rotate(-90deg) translate(-100%,0);width:auto">Woodhaven</div>
<div class="ab" style="left:258.4px;top:269.5px;width:60.6px;height:11px;background:#dadada;box-shadow:0.5px 0.5px 1px #bbb"></div>
<div class="t" style="left:260.5px;top:272.06px;font-size:6.9px;color:#222;font-weight:400;">neighbourhood</div>
<svg class="ab" style="left:310px;top:273.5px" width="6" height="4"><path d="M0.5 0.5h4.5l-2.25 2.8z" fill="#333"/></svg>
<div class="ab" style="left:278px;top:287px;width:124.2px;height:25.8px;background:#fff"></div>
<div class="t" style="left:279.5px;top:304.16px;font-size:8.2px;color:#111;font-weight:700;">Sparklines for Monthly Reviews</div>
<div class="ab" style="left:277.9px;top:313.5px;width:499.4px;height:99.5px;background:#fff"></div>
<svg class="ab" style="left:0;top:0" width="1000" height="532"><polyline points="280.30,379.98 283.45,389.88 286.60,373.66 289.75,377.42 292.89,382.20 296.04,402.17 299.19,377.93 302.34,372.81 305.49,337.99 308.64,380.15 311.79,363.25 314.93,326.55 318.08,361.54 321.23,376.56 324.38,369.74 327.53,391.41 330.68,385.27 333.82,357.79 336.97,398.07 340.12,395.85 343.27,382.20 346.42,356.76 349.57,377.59 352.72,377.76 355.86,367.00 359.01,364.27 362.16,378.95 365.31,387.32 368.46,318.35 371.61,364.27 374.75,402.51 377.90,394.32 381.05,371.44 384.20,394.83 387.35,367.17 390.50,389.54 393.65,393.46 396.79,409.68 399.94,377.08 403.09,394.83 406.24,381.00 409.39,368.54 412.54,375.20 415.69,400.97 418.83,375.20 421.98,362.74 425.13,400.46 428.28,316.82 431.43,373.32 434.58,376.73 437.73,355.06 440.87,383.73 444.02,388.51 447.17,396.71 450.32,363.25 453.47,370.42 456.62,356.93 459.76,374.34 462.91,387.66 466.06,395.34 469.21,378.95 472.36,375.20 475.51,405.58 478.66,365.30 481.80,396.36 484.95,395.34 488.10,402.00 491.25,378.95 494.40,361.88 497.55,379.98 500.69,369.56 503.84,328.26 506.99,357.96 510.14,389.54 513.29,390.56 516.44,397.22 519.59,384.76 522.73,369.56 525.88,357.96 529.03,354.03 532.18,378.95 535.33,408.65 538.48,381.00 541.63,378.95 544.77,369.56 547.92,335.94 551.07,392.44 554.22,410.70 557.37,407.80 560.52,392.44 563.66,387.66 566.81,375.20 569.96,376.73 573.11,359.49 576.26,379.98 579.41,378.95 582.56,399.27 585.70,385.78 588.85,349.42 592.00,379.98 595.15,359.83 598.30,398.24 601.45,365.30 604.60,363.25 607.74,390.56 610.89,393.46 614.04,403.02 617.19,377.93 620.34,378.95 623.49,387.66 626.63,387.66 629.78,387.66 632.93,394.32 636.08,356.08 639.23,394.32 642.38,389.54 645.53,388.51 648.67,378.95 651.82,357.62 654.97,388.68 658.12,361.37 661.27,374.34 664.42,377.08 667.57,371.44 670.71,393.46 673.86,357.96 677.01,372.98 680.16,371.44 683.31,386.63 686.46,319.72 689.61,343.62 692.75,381.00 695.90,323.13 699.05,367.69 702.20,375.20 705.35,377.08 708.50,381.85 711.64,389.54 714.79,352.67 717.94,373.32 721.09,375.20 724.24,400.97 727.39,394.32 730.54,402.34 733.68,344.64 736.83,397.22 739.98,384.76 743.13,388.68 746.28,357.96 749.43,349.42 752.58,384.76 755.72,383.73 758.87,389.54 762.02,404.90 765.17,385.78 768.32,403.02 771.47,378.95 774.61,356.42" fill="none" stroke="#7590b2" stroke-width="0.75" stroke-linejoin="miter"/></svg>
<div class="ab" style="left:782px;top:104.2px;width:124.5px;height:115.60000000000001px;background:#fff;border:1px solid #ccd5df;box-shadow:0 0 1px #e5e5e5"></div>
<div class="t" style="left:788px;top:109.29px;font-size:8.4px;color:#111;font-weight:700;">neighbourhood g...</div>
<svg class="ab" style="left:869.0px;top:107.9px" width="40" height="14">
<path d="M0.8 1.8l1.4 1.4 2.4-2.6M0.8 5.3l1.4 1.4 2.4-2.6M0.8 8.8l1.4 1.4 2.4-2.6" fill="none" stroke="#555" stroke-width="0.8"/>
<path d="M5.5 2.5h5M5.5 6h5M5.5 9.5h5" stroke="#555" stroke-width="0.9"/>
<path d="M20 0.8h11l-4.6 5v4.6l-1.8 1v-5.6z" fill="none" stroke="#a7adb3" stroke-width="0.8"/>
<path d="M27.6 7.6l2.4 2.4M30 7.6l-2.4 2.4" stroke="#b0b0b0" stroke-width="0.7"/>
</svg>
<div class="ab" style="left:788px;top:121.3px;width:112.5px;height:1px;background:#d4dbe3"></div>
<div class="ab" style="left:787.5px;top:124.2px;width:114.2px;height:16.200000000000003px;background:linear-gradient(#c3dbf2,#b9d3ec);border:1px solid #a9c0d8;border-radius:2.5px"></div>
<div class="t" style="left:793px;top:128.07px;font-size:8.9px;color:#2b3340;font-weight:400;">Bronx</div>
<div class="ab" style="left:787.5px;top:142.6px;width:114.2px;height:16.0px;background:linear-gradient(#c3dbf2,#b9d3ec);border:1px solid #a9c0d8;border-radius:2.5px"></div>
<div class="t" style="left:793px;top:146.37px;font-size:8.9px;color:#2b3340;font-weight:400;">Brooklyn</div>
<div class="ab" style="left:787.5px;top:161px;width:114.2px;height:16px;background:linear-gradient(#c3dbf2,#b9d3ec);border:1px solid #a9c0d8;border-radius:2.5px"></div>
<div class="t" style="left:793px;top:164.77px;font-size:8.9px;color:#2b3340;font-weight:400;">Manhattan</div>
<div class="ab" style="left:787.5px;top:179.3px;width:114.2px;height:16.0px;background:linear-gradient(#c3dbf2,#b9d3ec);border:1px solid #a9c0d8;border-radius:2.5px"></div>
<div class="t" style="left:793px;top:183.07px;font-size:8.9px;color:#2b3340;font-weight:400;">Queens</div>
<div class="ab" style="left:787.5px;top:197.6px;width:114.2px;height:16.0px;background:linear-gradient(#c3dbf2,#b9d3ec);border:1px solid #a9c0d8;border-radius:2.5px"></div>
<div class="t" style="left:793px;top:201.37px;font-size:8.9px;color:#2b3340;font-weight:400;">Staten Island</div>
<div class="ab" style="left:781.4px;top:223px;width:124.5px;height:79px;background:#fff;border:1px solid #ccd5df;box-shadow:0 0 1px #e5e5e5"></div>
<div class="t" style="left:787.4px;top:228.07px;font-size:8.9px;color:#111;font-weight:700;">room type</div>
<svg class="ab" style="left:868.4px;top:227.1px" width="40" height="14">
<path d="M0.8 1.8l1.4 1.4 2.4-2.6M0.8 5.3l1.4 1.4 2.4-2.6M0.8 8.8l1.4 1.4 2.4-2.6" fill="none" stroke="#555" stroke-width="0.8"/>
<path d="M5.5 2.5h5M5.5 6h5M5.5 9.5h5" stroke="#555" stroke-width="0.9"/>
<path d="M20 0.8h11l-4.6 5v4.6l-1.8 1v-5.6z" fill="none" stroke="#a7adb3" stroke-width="0.8"/>
<path d="M27.6 7.6l2.4 2.4M30 7.6l-2.4 2.4" stroke="#b0b0b0" stroke-width="0.7"/>
</svg>
<div class="ab" style="left:787.4px;top:240.4px;width:112.5px;height:1px;background:#d4dbe3"></div>
<div class="ab" style="left:786.9px;top:244.6px;width:114.2px;height:15.000000000000028px;background:linear-gradient(#c3dbf2,#b9d3ec);border:1px solid #a9c0d8;border-radius:2.5px"></div>
<div class="t" style="left:792.4px;top:247.87px;font-size:8.9px;color:#2b3340;font-weight:400;">Entire home/apt</div>
<div class="ab" style="left:786.9px;top:262.7px;width:114.2px;height:15.0px;background:linear-gradient(#c3dbf2,#b9d3ec);border:1px solid #a9c0d8;border-radius:2.5px"></div>
<div class="t" style="left:792.4px;top:265.97px;font-size:8.9px;color:#2b3340;font-weight:400;">Private room</div>
<div class="ab" style="left:786.9px;top:280.9px;width:114.2px;height:15.0px;background:linear-gradient(#c3dbf2,#b9d3ec);border:1px solid #a9c0d8;border-radius:2.5px"></div>
<div class="t" style="left:792.4px;top:284.17px;font-size:8.9px;color:#2b3340;font-weight:400;">Shared room</div>
<div class="ab" style="left:781.4px;top:307.4px;width:124.5px;height:63.80000000000001px;background:#fff;border:1px solid #ccd5df;box-shadow:0 0 1px #e5e5e5"></div>
<div class="t" style="left:787.4px;top:312.00px;font-size:8.5px;color:#111;font-weight:700;">instant_bookable</div>
<svg class="ab" style="left:868.4px;top:310.7px" width="40" height="14">
<path d="M0.8 1.8l1.4 1.4 2.4-2.6M0.8 5.3l1.4 1.4 2.4-2.6M0.8 8.8l1.4 1.4 2.4-2.6" fill="none" stroke="#555" stroke-width="0.8"/>
<path d="M5.5 2.5h5M5.5 6h5M5.5 9.5h5" stroke="#555" stroke-width="0.9"/>
<path d="M20 0.8h11l-4.6 5v4.6l-1.8 1v-5.6z" fill="none" stroke="#a7adb3" stroke-width="0.8"/>
<path d="M27.6 7.6l2.4 2.4M30 7.6l-2.4 2.4" stroke="#b0b0b0" stroke-width="0.7"/>
</svg>
<div class="ab" style="left:787.4px;top:324.3px;width:112.5px;height:1px;background:#d4dbe3"></div>
<div class="ab" style="left:786.9px;top:327.3px;width:114.2px;height:15.699999999999989px;background:linear-gradient(#c3dbf2,#b9d3ec);border:1px solid #a9c0d8;border-radius:2.5px"></div>
<div class="t" style="left:792.4px;top:330.92px;font-size:8.9px;color:#2b3340;font-weight:400;">FALSE</div>
<div class="ab" style="left:786.9px;top:345.4px;width:114.2px;height:15.700000000000045px;background:linear-gradient(#c3dbf2,#b9d3ec);border:1px solid #a9c0d8;border-radius:2.5px"></div>
<div class="t" style="left:792.4px;top:349.02px;font-size:8.9px;color:#2b3340;font-weight:400;">TRUE</div>
<div class="ab" style="left:985px;top:300.5px;width:2px;height:13px;background:#1e6b3d"></div>
<div class="ab" style="left:987px;top:74.5px;width:13px;height:422.5px;background:#f7f7f7;border-left:1px solid #e2e2e2"></div>
<svg class="ab" style="left:989px;top:78px" width="10" height="7"><path d="M1 5.5l3.8-4.2 3.8 4.2z" fill="#555"/></svg>
<div class="ab" style="left:991px;top:87px;width:6px;height:79px;background:#858585;border-radius:3px"></div>
<svg class="ab" style="left:989px;top:489px" width="10" height="7"><path d="M1 1.3l3.8 4.2 3.8-4.2z" fill="#555"/></svg>
<div class="ab" style="left:0;top:496.6px;width:1000px;height:20.4px;background:#efefef;border-top:1px solid #dcdcdc"></div>
<svg class="ab" style="left:14px;top:501px" width="34" height="12"><path d="M7 2l-3.5 4 3.5 4M24.5 2l3.5 4-3.5 4" fill="none" stroke="#a8a8a8" stroke-width="0.9"/></svg>
<div class="t" style="left:78.6px;top:503.21px;font-size:9.2px;color:#444;font-weight:400;">airbnb</div>
<div class="ab" style="left:116px;top:496.6px;width:88.2px;height:20.4px;background:#fff"></div>
<div class="t" style="left:121.6px;top:501.66px;font-size:9.38px;color:#222;font-weight:400;">reviews per month</div>
<div class="ab" style="left:121.2px;top:511.6px;width:77.4px;height:1.3px;background:#2a8a58;border-radius:1px"></div>
<div class="t" style="left:215.2px;top:503.43px;font-size:9.3px;color:#444;font-weight:400;">top 5</div>
<div class="t" style="left:257px;top:503.60px;font-size:9.1px;color:#444;font-weight:400;">Price Distribution</div>
<svg class="ab" style="left:361px;top:501px" width="11" height="11"><path d="M5.5 1v9M1 5.5h9" stroke="#444" stroke-width="1"/></svg>
<div class="ab" style="left:601.3px;top:503.3px;width:1.2px;height:1.2px;background:#555;box-shadow:0 2.5px #555,0 5px #555"></div>
<div class="ab" style="left:613.6px;top:502.6px;width:376px;height:8.5px;background:#fafafa;border-radius:4px"></div>
<svg class="ab" style="left:614px;top:503px" width="376" height="8"><path d="M2 4l3.5-3v6z" fill="#555"/><path d="M370 4l-3.5-3v6z" transform="translate(2 0) scale(1 1)" fill="#555"/></svg>
<div class="ab" style="left:624px;top:504px;width:338px;height:5.5px;background:#808080;border-radius:3px"></div>
<div class="ab" style="left:0;top:517px;width:1000px;height:14px;background:#f3f3f3;border-top:1px solid #d8d8d8"></div>
<div class="ab" style="left:0;top:530.7px;width:1000px;height:1.3px;background:#555"></div>
<div class="t" style="left:7.6px;top:521.67px;font-size:7.0px;color:#444;font-weight:400;letter-spacing:-0.2px">Ready</div>
<svg class="ab" style="left:39px;top:519px" width="12" height="11"><rect x="1" y="1.5" width="8.5" height="7.5" fill="none" stroke="#555" stroke-width="0.9"/><path d="M1 3.5h8.5" stroke="#555"/><circle cx="7.5" cy="7" r="2" fill="#555"/></svg>
<svg class="ab" style="left:59px;top:518.5px" width="13" height="12"><circle cx="6" cy="2.5" r="1.5" fill="none" stroke="#555" stroke-width="0.8"/><path d="M2 5h8M6 5v3l-2.5 3M6 8l2.5 3" fill="none" stroke="#555" stroke-width="0.8"/></svg>
<div class="t" style="left:72px;top:521.51px;font-size:7.2px;color:#333;font-weight:700;letter-spacing:-0.2px">Accessibility: Investigate</div>
<div class="ab" style="left:807px;top:517.5px;width:25px;height:13px;background:#dcdcdc"></div>
<svg class="ab" style="left:800px;top:517px" width="200" height="14">
<g fill="none" stroke="#555" stroke-width="0.8"><rect x="14.5" y="3" width="8" height="7.5"/><path d="M14.5 5.5h8M14.5 8h8M17.2 3v7.5M19.8 3v7.5"/>
<rect x="40.5" y="3" width="8" height="7.5"/><rect x="42" y="4.5" width="5" height="4.5"/>
<path d="M66.5 2.5v8h9v-8h-3.5v4h-2.5v-4z"/></g>
<path d="M88 7h5" stroke="#555" stroke-width="0.8"/>
<path d="M96 7h66" stroke="#b5b5b5" stroke-width="1"/>
<rect x="127.5" y="3.5" width="2.5" height="7" fill="#444"/>
<path d="M163.5 7h5M166 4.5v5" stroke="#555" stroke-width="0.8"/>
</svg>
<div class="t" style="left:979px;top:521.14px;font-size:7.4px;color:#444;font-weight:400;letter-spacing:-0.1px">100%</div>
</body></html>
